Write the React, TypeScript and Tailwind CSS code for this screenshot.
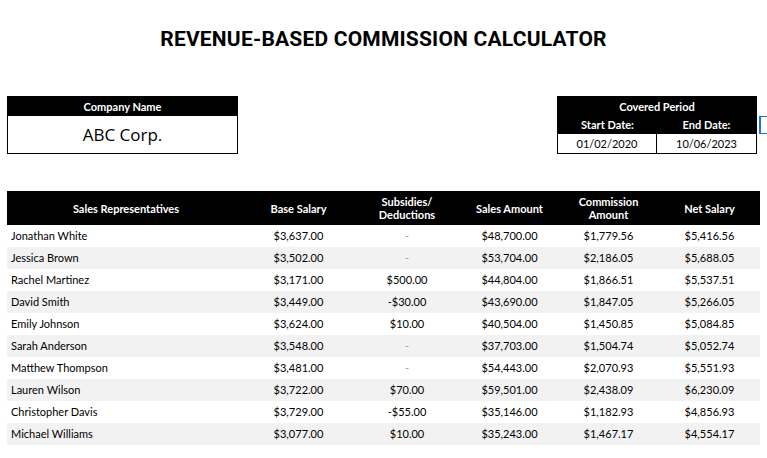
const rows = [
  ["Jonathan White", "$3,637.00", "-", "$48,700.00", "$1,779.56", "$5,416.56"],
  ["Jessica Brown", "$3,502.00", "-", "$53,704.00", "$2,186.05", "$5,688.05"],
  ["Rachel Martinez", "$3,171.00", "$500.00", "$44,804.00", "$1,866.51", "$5,537.51"],
  ["David Smith", "$3,449.00", "-$30.00", "$43,690.00", "$1,847.05", "$5,266.05"],
  ["Emily Johnson", "$3,624.00", "$10.00", "$40,504.00", "$1,450.85", "$5,084.85"],
  ["Sarah Anderson", "$3,548.00", "-", "$37,703.00", "$1,504.74", "$5,052.74"],
  ["Matthew Thompson", "$3,481.00", "-", "$54,443.00", "$2,070.93", "$5,551.93"],
  ["Lauren Wilson", "$3,722.00", "$70.00", "$59,501.00", "$2,438.09", "$6,230.09"],
  ["Christopher Davis", "$3,729.00", "-$55.00", "$35,146.00", "$1,182.93", "$4,856.93"],
  ["Michael Williams", "$3,077.00", "$10.00", "$35,243.00", "$1,467.17", "$4,554.17"],
];
const cols = "grid grid-cols-[238px_107px_110px_95px_103px_99px]";

export default function App() {
  return (
    <div className="w-[767px] h-[458px] bg-white text-black overflow-hidden" style={{ fontFamily: "Lato, 'Liberation Sans', sans-serif" }}>
      <h1 className="text-center text-[21px] font-bold pt-[26px] leading-[26px] tracking-[0.2px]" style={{ fontFamily: "Roboto, 'Liberation Sans', sans-serif" }}>
        REVENUE-BASED COMMISSION CALCULATOR
      </h1>
      <div className="flex justify-between mt-[44px] pl-[7px] pr-[10px]">
        <div className="w-[231px] border border-black">
          <div className="bg-black text-white text-[11px] font-bold text-center h-[19px] leading-[19px]">Company Name</div>
          <div className="h-[37px] flex items-center justify-center text-[17px]" style={{ fontFamily: "'Open Sans', sans-serif" }}>ABC Corp.</div>
        </div>
        <div className="relative w-[200px] border border-black">
          <div className="bg-black text-white text-[11px] font-bold text-center h-[19px] leading-[19px]">Covered Period</div>
          <div className="bg-black text-white text-[11px] font-bold grid grid-cols-2 h-[18px] leading-[18px] text-center">
            <div>Start Date:</div><div>End Date:</div>
          </div>
          <div className="grid grid-cols-2 text-[11px] text-center h-[19px] leading-[19px]">
            <div className="border-r border-black">01/02/2020</div><div>10/06/2023</div>
          </div>
          <div className="absolute left-[201px] top-[19px] w-[9px] h-[18px] border-l-2 border-t border-b border-[#1a73e8]" />
        </div>
      </div>
      <div className="mt-[37px] mx-[7px] text-[11px]">
        <div className={`${cols} bg-black text-white font-bold h-[34px] items-center text-center leading-[13px]`}>
          <div>Sales Representatives</div>
          <div>Base Salary</div>
          <div>Subsidies/<br />Deductions</div>
          <div>Sales Amount</div>
          <div>Commission<br />Amount</div>
          <div>Net Salary</div>
        </div>
        {rows.map((r, i) => (
          <div key={i} className={`${cols} h-[22px] items-center text-center ${i % 2 ? "bg-[#f2f2f2]" : "bg-white"}`}>
            <div className="text-left pl-[4px]">{r[0]}</div>
            <div>{r[1]}</div>
            <div className={r[2] === "-" ? "text-gray-400" : ""}>{r[2]}</div>
            <div>{r[3]}</div>
            <div>{r[4]}</div>
            <div>{r[5]}</div>
          </div>
        ))}
      </div>
    </div>
  );
}
